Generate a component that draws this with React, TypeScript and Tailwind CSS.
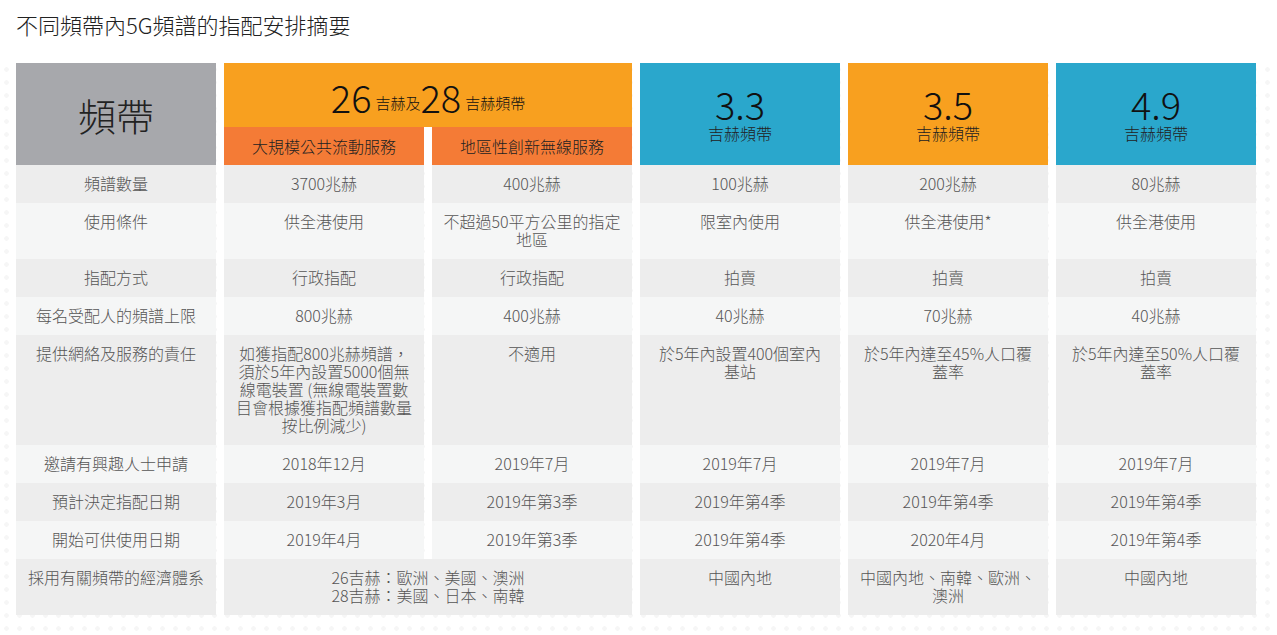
import React from "react";

const FONT = "font-['Noto_Sans_CJK_TC','Noto_Sans',sans-serif]";

type Cell = { text: React.ReactNode; span?: boolean };

const rows: { label: React.ReactNode; cells: Cell[] }[] = [
  {
    label: "頻譜數量",
    cells: [
      { text: "3700兆赫" },
      { text: "400兆赫" },
      { text: "100兆赫" },
      { text: "200兆赫" },
      { text: "80兆赫" },
    ],
  },
  {
    label: "使用條件",
    cells: [
      { text: "供全港使用" },
      {
        text: (
          <>
            不超過50平方公里的指定
            <br />
            地區
          </>
        ),
      },
      { text: "限室內使用" },
      { text: "供全港使用*" },
      { text: "供全港使用" },
    ],
  },
  {
    label: "指配方式",
    cells: [
      { text: "行政指配" },
      { text: "行政指配" },
      { text: "拍賣" },
      { text: "拍賣" },
      { text: "拍賣" },
    ],
  },
  {
    label: "每名受配人的頻譜上限",
    cells: [
      { text: "800兆赫" },
      { text: "400兆赫" },
      { text: "40兆赫" },
      { text: "70兆赫" },
      { text: "40兆赫" },
    ],
  },
  {
    label: "提供網絡及服務的責任",
    cells: [
      {
        text: (
          <>
            如獲指配800兆赫頻譜，
            <br />
            須於5年內設置5000個無
            <br />
            線電裝置 (無線電裝置數
            <br />
            目會根據獲指配頻譜數量
            <br />
            按比例減少)
          </>
        ),
      },
      { text: "不適用" },
      {
        text: (
          <>
            於5年內設置400個室內
            <br />
            基站
          </>
        ),
      },
      {
        text: (
          <>
            於5年內達至45%人口覆
            <br />
            蓋率
          </>
        ),
      },
      {
        text: (
          <>
            於5年內達至50%人口覆
            <br />
            蓋率
          </>
        ),
      },
    ],
  },
  {
    label: "邀請有興趣人士申請",
    cells: [
      { text: "2018年12月" },
      { text: "2019年7月" },
      { text: "2019年7月" },
      { text: "2019年7月" },
      { text: "2019年7月" },
    ],
  },
  {
    label: "預計決定指配日期",
    cells: [
      { text: "2019年3月" },
      { text: "2019年第3季" },
      { text: "2019年第4季" },
      { text: "2019年第4季" },
      { text: "2019年第4季" },
    ],
  },
  {
    label: "開始可供使用日期",
    cells: [
      { text: "2019年4月" },
      { text: "2019年第3季" },
      { text: "2019年第4季" },
      { text: "2020年4月" },
      { text: "2019年第4季" },
    ],
  },
  {
    label: "採用有關頻帶的經濟體系",
    cells: [
      {
        span: true,
        text: (
          <>
            26吉赫：歐洲、美國、澳洲
            <br />
            28吉赫：美國、日本、南韓
          </>
        ),
      },
      { text: "中國內地" },
      {
        text: (
          <>
            中國內地、南韓、歐洲、
            <br />
            澳洲
          </>
        ),
      },
      { text: "中國內地" },
    ],
  },
];

function BandHead({ num, color }: { num: string; color: string }) {
  return (
    <div className={`flex h-[102px] flex-col items-center justify-center text-[#111] ${color}`}>
      <span className="text-[38px] font-light leading-none">{num}</span>
      <span className="text-[16px] font-light leading-[20px] text-[#222]">吉赫頻帶</span>
    </div>
  );
}

export default function App() {
  return (
    <div className={`min-h-[635px] w-[1277px] bg-white ${FONT}`}>
      <h1 className="px-4 pt-[9px] text-[22px] font-light leading-[30px] text-[#222]">
        不同頻帶內5G頻譜的指配安排摘要
      </h1>

      <div className="mt-[24px] bg-[radial-gradient(circle,#f6f6f6_2px,transparent_2.5px)] bg-[length:13px_13px] px-4 pb-5">
        <div className="grid grid-cols-[repeat(6,200px)] gap-x-2 text-center">
          {/* header */}
          <div className="flex h-[102px] items-center justify-center bg-[#a7a8ac]">
            <span className="text-[38px] font-light text-[#222]">頻帶</span>
          </div>
          <div className="col-span-2 flex h-[102px] flex-col">
            <div className="flex h-[64px] items-center justify-center bg-[#f8a01f] pt-1 text-[#111]">
              <span className="text-[38px] font-light leading-none">26</span>
              <span className="ml-1 self-end pb-[13px] text-[15px] font-light">吉赫及</span>
              <span className="text-[38px] font-light leading-none">28</span>
              <span className="ml-1 self-end pb-[13px] text-[15px] font-light">吉赫頻帶</span>
            </div>
            <div className="flex flex-1 gap-2 bg-white">
              <div className="flex flex-1 items-center justify-center bg-[#f47b36] text-[16px] font-light text-[#222]">
                大規模公共流動服務
              </div>
              <div className="flex flex-1 items-center justify-center bg-[#f47b36] text-[16px] font-light text-[#222]">
                地區性創新無線服務
              </div>
            </div>
          </div>
          <BandHead num="3.3" color="bg-[#2aa7cc]" />
          <BandHead num="3.5" color="bg-[#f8a01f]" />
          <BandHead num="4.9" color="bg-[#2aa7cc]" />

          {/* body */}
          {rows.map((row, i) => {
            const bg = i % 2 === 0 ? "bg-[#ededed]" : "bg-[#f5f6f6]";
            const cell = `${bg} px-2 pt-[9px] pb-[11px] text-[16px] font-light leading-[18px] text-[#555]`;
            return (
              <React.Fragment key={i}>
                <div className={cell}>{row.label}</div>
                {row.cells.map((c, j) => (
                  <div key={j} className={`${cell} ${c.span ? "col-span-2" : ""}`}>
                    {c.text}
                  </div>
                ))}
              </React.Fragment>
            );
          })}
        </div>
      </div>
    </div>
  );
}
